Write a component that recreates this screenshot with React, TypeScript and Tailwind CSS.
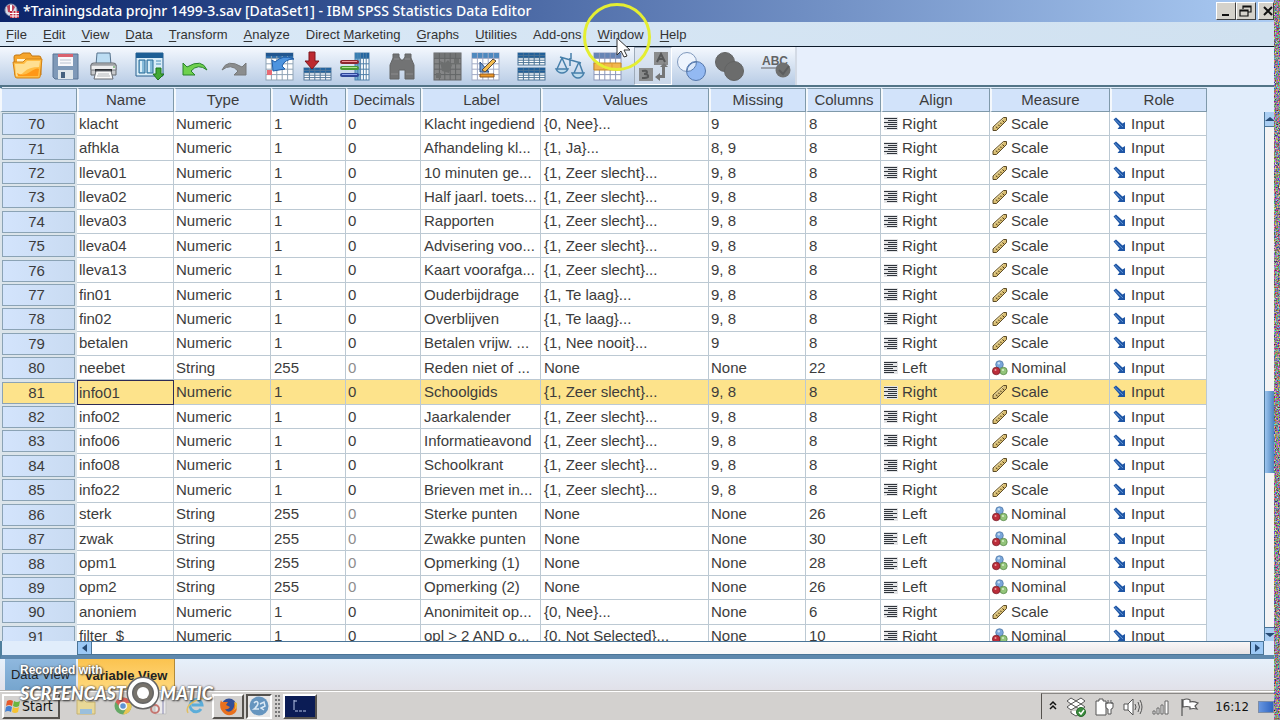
import type { ReactNode } from "react"

type Row = {
    nr: number
    name: string
    type: string
    width: string
    label: string
    values: string
    missing: string
    columns: string
    align: "Right" | "Left"
    measure: "Scale" | "Nominal"
}

const row = (nr: number, name: string, type: string, width: string, label: string, values: string, missing: string, columns: string, align: Row["align"], measure: Row["measure"]): Row => ({
    nr, name, type, width, label, values, missing, columns, align, measure,
})

const rows: Row[] = [
    row(70, "klacht", "Numeric", "1", "Klacht ingediend", "{0, Nee}...", "9", "8", "Right", "Scale"),
    row(71, "afhkla", "Numeric", "1", "Afhandeling kl...", "{1, Ja}...", "8, 9", "8", "Right", "Scale"),
    row(72, "lleva01", "Numeric", "1", "10 minuten ge...", "{1, Zeer slecht}...", "9, 8", "8", "Right", "Scale"),
    row(73, "lleva02", "Numeric", "1", "Half jaarl. toets...", "{1, Zeer slecht}...", "9, 8", "8", "Right", "Scale"),
    row(74, "lleva03", "Numeric", "1", "Rapporten", "{1, Zeer slecht}...", "9, 8", "8", "Right", "Scale"),
    row(75, "lleva04", "Numeric", "1", "Advisering voo...", "{1, Zeer slecht}...", "9, 8", "8", "Right", "Scale"),
    row(76, "lleva13", "Numeric", "1", "Kaart voorafga...", "{1, Zeer slecht}...", "9, 8", "8", "Right", "Scale"),
    row(77, "fin01", "Numeric", "1", "Ouderbijdrage", "{1, Te laag}...", "9, 8", "8", "Right", "Scale"),
    row(78, "fin02", "Numeric", "1", "Overblijven", "{1, Te laag}...", "9, 8", "8", "Right", "Scale"),
    row(79, "betalen", "Numeric", "1", "Betalen vrijw. ...", "{1, Nee nooit}...", "9", "8", "Right", "Scale"),
    row(80, "neebet", "String", "255", "Reden niet of ...", "None", "None", "22", "Left", "Nominal"),
    row(81, "info01", "Numeric", "1", "Schoolgids", "{1, Zeer slecht}...", "9, 8", "8", "Right", "Scale"),
    row(82, "info02", "Numeric", "1", "Jaarkalender", "{1, Zeer slecht}...", "9, 8", "8", "Right", "Scale"),
    row(83, "info06", "Numeric", "1", "Informatieavond", "{1, Zeer slecht}...", "9, 8", "8", "Right", "Scale"),
    row(84, "info08", "Numeric", "1", "Schoolkrant", "{1, Zeer slecht}...", "9, 8", "8", "Right", "Scale"),
    row(85, "info22", "Numeric", "1", "Brieven met in...", "{1, Zeer slecht}...", "9, 8", "8", "Right", "Scale"),
    row(86, "sterk", "String", "255", "Sterke punten", "None", "None", "26", "Left", "Nominal"),
    row(87, "zwak", "String", "255", "Zwakke punten", "None", "None", "30", "Left", "Nominal"),
    row(88, "opm1", "String", "255", "Opmerking (1)", "None", "None", "28", "Left", "Nominal"),
    row(89, "opm2", "String", "255", "Opmerking (2)", "None", "None", "26", "Left", "Nominal"),
    row(90, "anoniem", "Numeric", "1", "Anonimiteit op...", "{0, Nee}...", "None", "6", "Right", "Scale"),
    row(91, "filter_$", "Numeric", "1", "opl > 2 AND o...", "{0, Not Selected}...", "None", "10", "Right", "Nominal"),
]

const headers = [
    { title: "", width: "w-[77px]" },
    { title: "Name", width: "w-[97px]" },
    { title: "Type", width: "w-[97px]" },
    { title: "Width", width: "w-[75px]" },
    { title: "Decimals", width: "w-[75px]" },
    { title: "Label", width: "w-[120px]" },
    { title: "Values", width: "w-[168px]" },
    { title: "Missing", width: "w-[97px]" },
    { title: "Columns", width: "w-[75px]" },
    { title: "Align", width: "w-[109px]" },
    { title: "Measure", width: "w-[120px]" },
    { title: "Role", width: "w-[97px]" },
]

// [before, mnemonic, after]
const menus = [
    ["", "F", "ile"],
    ["", "E", "dit"],
    ["", "V", "iew"],
    ["", "D", "ata"],
    ["", "T", "ransform"],
    ["", "A", "nalyze"],
    ["Direct ", "M", "arketing"],
    ["", "G", "raphs"],
    ["", "U", "tilities"],
    ["Add-", "o", "ns"],
    ["", "W", "indow"],
    ["", "H", "elp"],
]

const AlignIcon = ({ left }: { left: boolean }) => (
    <svg width="14" height="13" viewBox="0 0 14 13" stroke="#30353c" strokeWidth="1">
        <rect width="14" height="13" fill="#e3e4e6" stroke="none" />
        <path d={left ? "M0 1.5h13M0 3.5h9M0 5.5h13M0 7.5h9M0 9.5h13M0 11.5h10" : "M0 1.5h13M4 3.5h9M0 5.5h13M4 7.5h9M0 9.5h13M3 11.5h10"} />
    </svg>
)

const ScaleIcon = () => (
    <svg width="16" height="16" viewBox="0 0 16 16">
        <path d="M1 11 11.500 1.500h3v3L4.500 14.500H1z" fill="#d8bd72" stroke="#5b4a26" strokeLinejoin="round" />
        <path d="m3.500 10.500 2 1.500M6 8.500l1.500 1.500M8 6.500 9.500 8M10.500 4.500 12 6" stroke="#4d3d1c" />
        <path d="m2 11.500 9.500-9" stroke="#f2e2ab" />
    </svg>
)

const NominalIcon = () => (
    <svg width="16" height="16" viewBox="0 0 16 16">
        <circle cx="7.500" cy="4.500" r="3.800" fill="#7aa6da" stroke="#47719f" strokeWidth=".7" />
        <circle cx="11.500" cy="11" r="3.700" fill="#93c47a" stroke="#4c7f3d" strokeWidth=".7" />
        <circle cx="4.200" cy="11" r="3.800" fill="#bb2d3a" stroke="#701722" strokeWidth=".7" />
        <circle cx="3.500" cy="10" r="1" fill="#f09a9f" />
        <circle cx="6.800" cy="3.300" r="1.200" fill="#c6def5" />
        <circle cx="11" cy="10" r="1.100" fill="#d5efc8" />
    </svg>
)

const InputIcon = () => (
    <svg width="14" height="14" viewBox="0 0 14 14">
        <path d="m.5 2.500 2.500-2 6.500 6L12 5v7H4.500l2-2.500z" fill="#1f56a5" />
        <path d="m2 2.500 8 7.500" stroke="#5f94d6" />
    </svg>
)

const Grid = ({ x = 2, y = 2, w = 27, h = 27, head = "#2a6cab", line = "#8fa3b5", fill = "#fff" }: { x?: number; y?: number; w?: number; h?: number; head?: string; line?: string; fill?: string }) => (
    <g>
        <rect x={x} y={y} width={w} height={h} fill={fill} stroke={line} />
        <rect x={x} y={y} width={w} height="5" fill={head} />
        {[1, 2, 3, 4].map((n) => (
            <g key={n} stroke={line}>
                <path d={`M${x + (w * n) / 5} ${y}v${h}`} />
                <path d={`M${x} ${y + (h * n) / 5}h${w}`} />
            </g>
        ))}
    </g>
)

const OpenIcon = () => (
    <g strokeLinejoin="round">
        <path d="M2 6q0-2 2-2h4l3-2h7l2 3h7q2 0 2 2v17H3z" fill="#f6a52c" stroke="#c17712" />
        <path d="M5 8h22v8H5z" fill="#fff4d0" />
        <path d="M1 11h10l3-3h16l-2 18q0 1-2 1H5q-2 0-2-2z" fill="#ffbd45" stroke="#d38214" />
        <path d="M3 13h9l3-3h13l-1 6q-10 0-15 5t-8 4z" fill="#ffdf91" />
        <path d="M5 22q6 4 13-1t9-3l-1 7H6z" fill="#ff9716" />
    </g>
)
const SaveIcon = () => (
    <g>
        <path d="M3 3h25v25H5l-2-2z" fill="#7f99b8" stroke="#5b7594" />
        <path d="M8 3h15v12H8z" fill="#f8f8fb" />
        <path d="M8 3h15v3H8z" fill="#d9616e" />
        <path d="M10 9h11M10 12h11" stroke="#bac2d0" />
        <path d="M8 19h15v9H8z" fill="#dfe6ea" />
        <path d="M11 21h4v6h-4z" fill="#46617e" />
    </g>
)
const PrintIcon = () => (
    <g strokeLinejoin="round">
        <path d="M9 2h13l1 12H8z" fill="#bcddf3" stroke="#57738d" />
        <path d="M3 14q0-2 3-2h19q3 0 3 2v10H3z" fill="#c7c9cc" stroke="#64686d" />
        <path d="M3 14h25v5H3z" fill="#eeeeef" stroke="#75797e" />
        <path d="M7 18h17v3H7z" fill="#303439" />
        <path d="m8 20-2 8h19l-2-8z" fill="#fafafa" stroke="#666b72" />
        <path d="M10 23h11M9 25h13" stroke="#b2b6ba" />
        <path d="M25 16h2" stroke="#3f9c42" />
    </g>
)
const DialogIcon = () => (
    <g>
        <path d="M2 2h27v23H2z" fill="#d9edf8" stroke="#265f8d" />
        <path d="M2 2h27v5H2z" fill="#1c5e95" />
        <path d="M5 9h6v13H5zM13 9h6v13h-6z" fill="#86bbda" stroke="#2d6c98" />
        <path d="M7 10v11M15 10v11" stroke="#d8eef8" strokeWidth="2" />
        <path d="M22 10h5M22 13h5" stroke="#4e90bb" />
        <path d="M22 17h5v6h3l-6 6-5-6h3z" fill="#43a834" stroke="#1f741d" />
    </g>
)
const UndoIcon = () => <path d="M3 12v12h12l-4-4q7-8 16-1-5-12-20-3z" fill="#6fd14e" stroke="#28822c" strokeLinejoin="round" />
const RedoIcon = () => <path d="M28 12v12H16l4-4q-7-8-16-1 5-12 20-3z" fill="#8b8d8e" stroke="#77797a" strokeLinejoin="round" />
const GotoCaseIcon = () => (
    <g>
        <Grid />
        <path d="M2 2h27v3H2z" fill="#21568f" />
        <path d="M3 19h5v5H3z" fill="#e86a74" />
        <path d="m8 9 3 2q8-8 19-3-9 0-12 7l3 3-12 2z" fill="#4d94df" stroke="#1f5ea8" />
    </g>
)
const GotoVarIcon = () => (
    <g>
        <Grid x={2} y={17} w={27} h={12} head="#23649f" line="#56799a" />
        <path d="M7 1h6v9h4l-7 8-7-8h4z" fill="#bd2930" stroke="#7f161c" />
    </g>
)
const VariablesIcon = () => (
    <g>
        <Grid x={15} y={2} w={14} h={27} head="#23649f" line="#5280a8" />
        <path d="M15 2h5v27h-5z" fill="#4189bb" opacity=".7" />
        <path d="M2 11h15" stroke="#8e2730" strokeWidth="4" strokeLinecap="round" />
        <path d="M2 10.500h15" stroke="#f3939b" />
        <path d="M2 17h15" stroke="#4b9a35" strokeWidth="4" strokeLinecap="round" />
        <path d="M2 16.500h15" stroke="#b0e590" />
        <path d="M2 24h15" stroke="#30489a" strokeWidth="4" strokeLinecap="round" />
        <path d="M2 23.500h15" stroke="#91a6ed" />
    </g>
)
const FindIcon = () => (
    <g>
        <path d="M7 3h6v3l2 3h2l2-3V3h6v4l3 7v14h-9v-9h-6v9H4V14l3-7z" fill="#727374" stroke="#636465" />
        <path d="M5 23h7M20 23h7M8 8h5M19 8h5" stroke="#8b8c8d" />
    </g>
)
const GreyGridIcon = () => (
    <g>
        <Grid head="#737576" line="#636566" fill="#858687" />
        <path d="m8 10 5 2 3-3 4 5-3 8-7-2zM22 8h5v5h-5zM4 22h5v5H4z" fill="#6c6e6e" />
    </g>
)
const EditGridIcon = () => (
    <g>
        <Grid head="#4d88be" line="#a2abc5" />
        <path d="M10 11v10h9z" fill="#6f9bd0" stroke="#284e86" />
        <path d="M12 19 23 8l3 2-11 11z" fill="#f4bb4e" stroke="#5b4a3a" />
        <path d="M10 23h14v3H10z" fill="#f09a28" stroke="#8b541d" />
    </g>
)
const SplitIcon = () => (
    <g>
        <Grid x={2} y={2} w={27} h={12} head="#205f99" line="#4a7395" />
        <Grid x={2} y={17} w={27} h={12} head="#205f99" line="#4a7395" />
    </g>
)
const WeightIcon = () => (
    <g fill="none" stroke="#467faa" strokeWidth="1.500">
        <path d="M17 2v6M6 6l21 6M8 7 3 18M8 7l5 11M25 11l-5 11M25 11l4 11M16 7v8" />
        <path d="M2 18h12q-2 4-6 4t-6-4zM18 22h12q-2 5-6 5t-6-5z" fill="#bddbed" />
    </g>
)
const SelectIcon = () => (
    <g>
        <Grid head="#6685b5" line="#8d98b9" />
        <path d="M2 12h27v7H2z" fill="#f2b64e" stroke="#c88923" />
        <path d="M12 12v7M20 12v7" stroke="#e29d2e" />
    </g>
)
const LabelsIcon = () => (
    <g fill="#8a8b8c">
        <path d="M18 3h14v13H18zM3 19h14v13H3z" />
        <path d="m21 13 4-8 4 8M23 10h4M6 22q5-1 5 1 0 2-3 2 5 0 4 3-1 1-6 1" fill="none" stroke="#555657" strokeWidth="2" />
        <path d="M29 18v11h-5v3l-5-4 5-4v2h2v-8h-2l4-4 4 4z" fill="#757677" />
    </g>
)
const VennIcon = () => (
    <g>
        <circle cx="11" cy="11" r="9.500" fill="#eef4fd" stroke="#8099bd" />
        <circle cx="20" cy="20" r="9.500" fill="#93b9f2" stroke="#5577aa" />
        <path d="M11 20.500a9.500 9.500 0 0 1 9.500-9.500 9.500 9.500 0 0 1-9.500 9.500z" fill="#dbe8fb" stroke="#5a7daf" />
    </g>
)
const UnionIcon = () => (
    <g fill="#6b6c6c" stroke="#626363">
        <circle cx="11" cy="11" r="9.500" />
        <circle cx="20" cy="20" r="9.500" />
    </g>
)
const SpellIcon = () => (
    <g>
        <text x="2" y="14" fontFamily="Liberation Sans" fontWeight="700" fontSize="12" fill="#626364">ABC</text>
        <path d="M1 17h16" stroke="#626364" />
        <circle cx="23" cy="19" r="7.500" fill="#6f7070" />
        <path d="m19 19 4 4 6-8" fill="none" stroke="#5c5d5e" strokeWidth="2" />
    </g>
)

const toolGroups: { name: string; icon: ReactNode; pressed?: boolean }[][] = [
    [
        { name: "Open data document", icon: <OpenIcon /> },
        { name: "Save this document", icon: <SaveIcon /> },
        { name: "Print", icon: <PrintIcon /> },
    ],
    [{ name: "Recall recently used dialogs", icon: <DialogIcon /> }],
    [
        { name: "Undo", icon: <UndoIcon /> },
        { name: "Redo", icon: <RedoIcon /> },
    ],
    [
        { name: "Go to case", icon: <GotoCaseIcon /> },
        { name: "Go to variable", icon: <GotoVarIcon /> },
        { name: "Variables", icon: <VariablesIcon /> },
    ],
    [{ name: "Find", icon: <FindIcon /> }],
    [
        { name: "Insert cases", icon: <GreyGridIcon /> },
        { name: "Insert variable", icon: <EditGridIcon /> },
    ],
    [
        { name: "Split file", icon: <SplitIcon /> },
        { name: "Weight cases", icon: <WeightIcon /> },
        { name: "Select cases", icon: <SelectIcon /> },
    ],
    [
        { name: "Value labels", icon: <LabelsIcon />, pressed: true },
        { name: "Use variable sets", icon: <VennIcon /> },
        { name: "Show all variables", icon: <UnionIcon /> },
    ],
    [{ name: "Spell check", icon: <SpellIcon /> }],
]

const TitleBar = () => (
    <header className="flex h-[22px] shrink-0 items-center bg-linear-to-r from-[#0b246a] via-[#5b79b2] to-[#abcbf3] pl-1">
        <svg width="16" height="16" viewBox="0 0 16 16">
            <circle cx="7" cy="7" r="6" fill="#d4dbe8" stroke="#8b93ae" />
            <path d="M3 3q5-3 8 1l-3 6-4-1z" fill="#bd4058" />
            <path d="M7 2v8" stroke="#fff" strokeWidth="2" />
            <path d="M6 8h9v7H6z" fill="#c22b42" />
            <path d="M6 10.500h9M6 13h9M9 8v7M12 8v7" stroke="#fff" />
        </svg>
        <h1 className="ml-[3px] flex-1 font-['Noto_Sans'] text-sm leading-5 font-medium whitespace-nowrap text-white">
            *Trainingsdata projnr 1499-3.sav [DataSet1] - IBM SPSS Statistics Data Editor
        </h1>
        <div className="flex h-[18px]">
            {["Minimize", "Restore", "Close"].map((name) => (
                <button key={name} aria-label={name} className={`overflow-hidden border border-t-white border-r-[#404040] border-b-[#404040] border-l-white bg-[#d5d2cb] ${name === "Close" ? "ml-0.5 w-4" : "w-5"}`}>
                    <svg width="17" height="16" viewBox="0 0 17 16" fill="none" stroke="#111" strokeWidth="2">
                        {name === "Minimize" && <path d="M5 12h7" />}
                        {name === "Restore" && <path d="M6 6V3h8v6h-3M6 4h8M3 7h8v6H3zM3 8h8" strokeWidth="1.200" />}
                        {name === "Close" && <path d="m5 4 8 8M13 4l-8 8" />}
                    </svg>
                </button>
            ))}
        </div>
    </header>
)

const MenuBar = () => (
    <nav className="flex h-[25px] shrink-0 items-center gap-4 border-b border-[#0c1a2a] bg-linear-to-r from-[#dae9f7] to-[#d0e1f0] pt-0.5 pl-1.5 text-[13px] leading-4 text-[#333]">
        {menus.map(([before, key, after]) => (
            <button key={key + after} className="whitespace-nowrap">
                {before}
                <span className="underline underline-offset-2">{key}</span>
                {after}
            </button>
        ))}
    </nav>
)

const ToolBar = () => (
    <div className="flex h-10 shrink-0 border-b-2 border-[#527487] bg-[#e7effc]">
        <div className="flex gap-2 border-r-2 border-r-[#d3dae5] bg-linear-to-b from-[#f4f8fe] to-[#b8cce5] pr-px pl-2">
            {toolGroups.map((group) => (
                <div key={group[0].name} className="flex">
                    {group.map((tool) => (
                        <button
                            key={tool.name}
                            aria-label={tool.name}
                            className={`grid w-[38px] place-items-center border ${tool.pressed ? "border-t-[#9eabba] border-r-white border-b-white border-l-[#9eabba] bg-[#d5dfed]/60" : "border-transparent"}`}
                        >
                            <svg width={tool.pressed ? 34 : 31} height={tool.pressed ? 34 : 31} viewBox={tool.pressed ? "0 0 34 34" : "0 0 31 31"}>
                                {tool.icon}
                            </svg>
                        </button>
                    ))}
                </div>
            ))}
        </div>
    </div>
)

const cell = "border-r border-b border-[#bcc9d3] py-0 whitespace-nowrap"
const near = `${cell} pl-0.5`
const far = `${cell} pl-[3px]`

const VariableTable = () => (
    <table className="h-[561px] w-[1207px] table-fixed border-separate border-spacing-0 bg-white text-[15px] leading-5 text-[#3c3c3c]">
        <thead>
            <tr className="h-6">
                {headers.map((h) => (
                    <th key={h.title} className={`${h.width} h-6 border border-l-2 border-t-[#7f99aa] border-r-[#7f99aa] border-b-[#7f99aa] border-l-[#f4f8fc] bg-[#d2e3fa] p-0 text-center font-normal`}>
                        {h.title}
                    </th>
                ))}
            </tr>
        </thead>
        <tbody>
            {rows.map((r) => {
                const active = r.nr === 81
                return (
                    <tr key={r.nr} className={active ? "bg-[#fde38b]" : ""}>
                        <th scope="row" className="bg-[#dbe4ea] p-0 pt-px pr-0.5 pb-px pl-0.5 font-normal">
                            <div className={`h-[22px] border border-[#8ba3b5] pr-1 ${active ? "bg-[#fde38b]" : "bg-linear-to-r from-[#d3e4fc] to-[#c9dbf2]"}`}>{r.nr}</div>
                        </th>
                        <td className={active ? "border border-[#2d2b55] py-0 pl-px" : near}>{r.name}</td>
                        <td className={near}>{r.type}</td>
                        <td className={far}>{r.width}</td>
                        <td className={`${near} ${r.type === "String" ? "text-[#8d8d8d]" : ""}`}>0</td>
                        <td className={far}>{r.label}</td>
                        <td className={far}>{r.values}</td>
                        <td className={near}>{r.missing}</td>
                        <td className={far}>{r.columns}</td>
                        <td className={far}>
                            <div className="flex items-center gap-1">
                                <AlignIcon left={r.align === "Left"} />
                                {r.align}
                            </div>
                        </td>
                        <td className={near}>
                            <div className="flex items-center gap-[3px]">
                                {r.measure === "Scale" ? <ScaleIcon /> : <NominalIcon />}
                                {r.measure}
                            </div>
                        </td>
                        <td className={far}>
                            <div className="flex items-center gap-1">
                                <InputIcon />
                                Input
                            </div>
                        </td>
                    </tr>
                )
            })}
        </tbody>
    </table>
)

const Arrow = ({ d }: { d: string }) => (
    <svg width="10" height="10" viewBox="0 0 10 10" fill="#274a73">
        <path d={d} />
    </svg>
)

const DataGrid = () => (
    <main className="flex min-h-0 flex-1 flex-col border-b-4 border-l-2 border-b-[#5e88ad] border-l-[#4f7f9d] bg-[#e1edfb]">
        <div className="flex min-h-0 flex-1">
            <div className="-ml-0.5 min-w-0 flex-1 overflow-hidden pt-px">
                <VariableTable />
            </div>
            <div className="mt-[25px] flex w-[10px] shrink-0 flex-col border-l border-[#4b7597] bg-[#f5f4f4]">
                <button aria-label="Scroll up" className="grid h-[15px] place-items-center border-b border-[#4b7597] bg-[#a9cdf2]">
                    <Arrow d="M0 7h10L5 3z" />
                </button>
                <div className="flex-[264]" />
                <div className="flex-[82] bg-linear-to-r from-[#9bc4ef] to-[#4f86bf]" />
                <div className="flex-[154]" />
                <button aria-label="Scroll down" className="grid h-[14px] place-items-center border-t border-[#4b7597] bg-[#a9cdf2]">
                    <Arrow d="M0 3h10L5 7z" />
                </button>
            </div>
        </div>
        <div className="mr-[10px] ml-[75px] flex h-[14px] shrink-0 border border-[#4b7597] bg-linear-to-b from-[#f8f6f6] to-[#e6e2e4]">
            <button aria-label="Scroll left" className="grid w-[14px] place-items-center border-r border-[#4b7597] bg-[#9cc8f5]">
                <Arrow d="M7 1v8L2 5z" />
            </button>
            <div className="flex-1 bg-linear-to-r from-white from-40% to-transparent" />
            <button aria-label="Scroll right" className="grid w-[13px] place-items-center border-l border-[#24415f] bg-[#9cc8f5]">
                <Arrow d="M3 1v8l5-4z" />
            </button>
        </div>
    </main>
)

const ViewTabs = () => (
    <div className="flex h-8 shrink-0 gap-0.5 border-b border-[#b8b6b3] bg-linear-to-b from-[#e6f0fb] to-[#e1e1e9] pl-[5px] text-[13px]">
        <button className="w-[71px] bg-linear-to-b from-[#8fb8de] to-[#76a5ce] whitespace-nowrap text-[#222]">Data View</button>
        <button className="w-[97px] border-r border-[#b18a3a] bg-linear-to-b from-[#fbc34f] to-[#ffd97c] pt-0.5 font-bold whitespace-nowrap text-[#222]">Variable View</button>
    </div>
)

const raised = "border-2 border-t-white border-r-[#55524e] border-b-[#55524e] border-l-white"

const TaskBar = () => (
    <footer className="flex h-[29px] shrink-0 items-center border-t border-white bg-[#d3d1cf] pl-0.5 text-[#111]">
        <button className={`flex h-[25px] w-[58px] items-center ${raised}`}>
            <svg width="18" height="18" viewBox="0 0 18 18" className="shrink-0">
                <path d="M3 4q3-2 6 0L8 9q-3-2-6 0z" fill="#e65a2b" />
                <path d="M10 4q3 2 6 0l-1 5q-3 2-6 0z" fill="#6cb640" />
                <path d="M2 10q3-2 6 0l-1 5q-3-2-6 0z" fill="#4480d2" />
                <path d="M9 10q3 2 6 0l-1 5q-3 2-6 0z" fill="#f6c232" />
            </svg>
            <span className="font-['DejaVu_Sans_Condensed'] text-sm">Start</span>
        </button>
        <div className="ml-4 flex items-center gap-[18px] opacity-80">
            <button aria-label="Explorer">
                <svg width="20" height="20" viewBox="0 0 20 20">
                    <path d="M1 4h7l2 2h9v12H1z" fill="#eeda8a" stroke="#c4ac5a" />
                    <path d="M4 13h12v5H4z" fill="#8dbbe0" />
                </svg>
            </button>
            <button aria-label="Chrome">
                <svg width="18" height="20" viewBox="0 0 18 20">
                    <circle cx="9" cy="10" r="8.500" fill="#4a9f4b" />
                    <path d="M1.500 6A8.500 8.500 0 0 1 17 7H9L6 11z" fill="#d9453a" />
                    <path d="M17 7a8.500 8.500 0 0 1-8 11.500L13 11l-1-4z" fill="#efc337" />
                    <circle cx="9" cy="10" r="3.500" fill="#4285d4" stroke="#fff" strokeWidth="1.500" />
                </svg>
            </button>
            <button aria-label="Snipping tool">
                <svg width="18" height="20" viewBox="0 0 18 20" fill="none">
                    <path d="M5 1h11v17H5z" fill="#f1f1f3" stroke="#bbb" />
                    <circle cx="5" cy="13" r="4" stroke="#c2625c" strokeWidth="2" />
                    <path d="M13 4v14" stroke="#77a" />
                </svg>
            </button>
            <button aria-label="Internet Explorer">
                <svg width="20" height="20" viewBox="0 0 20 20" fill="none">
                    <path d="M15 13a6 6 0 1 1 1-4H6" stroke="#3fa5dc" strokeWidth="3" />
                    <path d="M2 17Q-1 11 7 6t11-3" stroke="#e4bb49" strokeWidth="1.500" />
                </svg>
            </button>
        </div>
        <div className="ml-1.5 flex items-center gap-0.5">
            <button aria-label="Firefox" className={`grid h-[25px] w-8 place-items-center ${raised}`}>
                <svg width="19" height="19" viewBox="0 0 19 19">
                    <circle cx="10" cy="9" r="7.500" fill="#314e96" />
                    <path d="M2 3q0 2 2 2l5 0-2 3 4 2q-2 3-5 2 2 4 6 2 4-3 3-8 5 6 1 10-5 4-10 1Q-1 12 2 3z" fill="#e8701e" />
                    <path d="M15 5q3 6-1 9 5-3 4-8z" fill="#f7bb32" />
                </svg>
            </button>
            <button aria-label="SPSS" className="grid h-[25px] w-[26px] place-items-center border-2 border-t-[#55524e] border-r-white border-b-white border-l-[#55524e] bg-[#e9e8e8]">
                <svg width="20" height="20" viewBox="0 0 20 20" fill="none">
                    <circle cx="10" cy="10" r="9.500" fill="#6695bf" />
                    <path d="M5 7q3-3 4 0 0 3-4 6h5M11 8l4-2 1 4-4 2 3 2" stroke="#dbe9f5" strokeWidth="1.500" />
                </svg>
            </button>
            <div className="mx-px h-[22px] w-[5px] border-x-2 border-dotted border-[#777]" />
            <button aria-label="Command prompt" className={`grid h-[25px] w-[34px] place-items-center bg-[#0b1c55] ${raised}`}>
                <svg width="28" height="20" viewBox="0 0 28 20" stroke="#b8c5e8" fill="none">
                    <path d="M8 4v10M8 5h3" />
                    <path d="M9 15h12" strokeDasharray="3 1" />
                </svg>
            </button>
        </div>
        <div className="ml-auto flex h-[26px] items-center gap-[9px] border-t border-l border-t-[#8a8886] border-l-[#55524e] pl-[7px]">
            <svg width="8" height="20" viewBox="0 0 8 20" stroke="#111" fill="none" strokeWidth="1.500">
                <path d="m1 8 3-3 3 3M1 12l3-3 3 3" />
            </svg>
            <svg width="20" height="20" viewBox="0 0 20 20" fill="#fff" stroke="#555">
                <path d="m1 4 4-3 5 3 5-3 4 3-4 3 4 3-4 3-5-3-5 3-4-3 4-3zM5 7l5-3 5 3-5 3zM5 14v2l5 3 5-3v-2" />
                <circle cx="15" cy="15" r="4.500" fill="#3a8b3d" stroke="#276b2b" />
                <path d="m13 15 2 2 3-4" fill="none" stroke="#fff" strokeWidth="1.500" />
            </svg>
            <svg width="19" height="20" viewBox="0 0 19 20" fill="#fff" stroke="#555">
                <path d="M1 4h3V2h4v2h3v14H1z" />
                <path d="M11 6h2V3m3 0v3h2v4q0 2-2 2v5h-3v-5q-2 0-2-2V6h7" />
            </svg>
            <svg width="20" height="20" viewBox="0 0 20 20" fill="#fff" stroke="#555">
                <path d="M1 7h4l5-5v16l-5-5H1zM5 7v6" />
                <path d="M12 7q2 3 0 6M15 5q3 5 0 10M17 3q4 7 0 14" fill="none" />
            </svg>
            <svg width="19" height="20" viewBox="0 0 19 20" fill="#fff" stroke="#666">
                <path d="M1 14h2v3H1zM5 11h2v6H5zM9 8h2v9H9zM13 4h3v13h-3z" />
            </svg>
            <svg width="20" height="20" viewBox="0 0 20 20" fill="#fff" stroke="#555">
                <path d="M2 2v17M3 3q4-2 7 0v2q3-1 8 1l-3 3 2 3q-4-1-7 0v-2q-3-1-7 0z" strokeWidth="1.200" />
            </svg>
            <time className="ml-1.5 font-['DejaVu_Sans_Condensed'] text-[13px]">16:12</time>
            <div className="h-3 w-4 border border-[#7c8da8] bg-linear-to-r from-[#6796e0] to-[#2f64c0]" />
        </div>
    </footer>
)

const Watermark = () => (
    <div className="pointer-events-none absolute bottom-3 left-5 text-white">
        <div className="text-xs leading-4 font-bold [text-shadow:0_0_2px_#444,1px_1px_2px_#444]">Recorded with</div>
        <div className="flex h-[30px] items-center font-['Lato'] text-lg leading-7 font-black italic [text-shadow:0_0_2px_#444,1px_1px_2px_#333]">
            SCREENCAST
            <svg width="34" height="34" viewBox="0 0 34 34" className="shrink-0">
                <circle cx="17" cy="17" r="13" fill="#77736c" stroke="#666" strokeWidth="7" />
                <circle cx="17" cy="17" r="13" fill="none" stroke="#fff" strokeWidth="4" />
                <circle cx="17" cy="17" r="6" fill="#fff" />
            </svg>
            MATIC
        </div>
    </div>
)

const Pointer = () => (
    <svg width="70" height="70" viewBox="0 0 70 70" className="pointer-events-none absolute top-[2px] left-[582px]" fill="none">
        <circle cx="35" cy="35" r="32.500" stroke="#e4ee32" strokeWidth="3" />
        <path d="M35 36v17l4-4 3 6 3-1-3-6h6z" fill="#fff" stroke="#333" />
    </svg>
)

// static along the edge of the capture
const EdgeNoise = () => (
    <svg className="h-full w-1.5 shrink-0">
        <filter id="noise" colorInterpolationFilters="sRGB">
            <feTurbulence type="fractalNoise" baseFrequency="0.7" numOctaves="2" />
            <feColorMatrix values="1.6 0 0 0 -.25  0 1.6 0 0 -.28  0 0 1.6 0 -.25  0 0 0 0 1" />
        </filter>
        <rect width="100%" height="100%" filter="url(#noise)" />
    </svg>
)

const App = () => {
    return (
        <div className="relative flex h-screen overflow-hidden font-['Liberation_Sans',sans-serif]">
            <div className="flex min-w-0 flex-1 flex-col">
                <TitleBar />
                <MenuBar />
                <ToolBar />
                <DataGrid />
                <ViewTabs />
                <TaskBar />
            </div>
            <EdgeNoise />
            <Pointer />
            <Watermark />
        </div>
    )
}

export default App
